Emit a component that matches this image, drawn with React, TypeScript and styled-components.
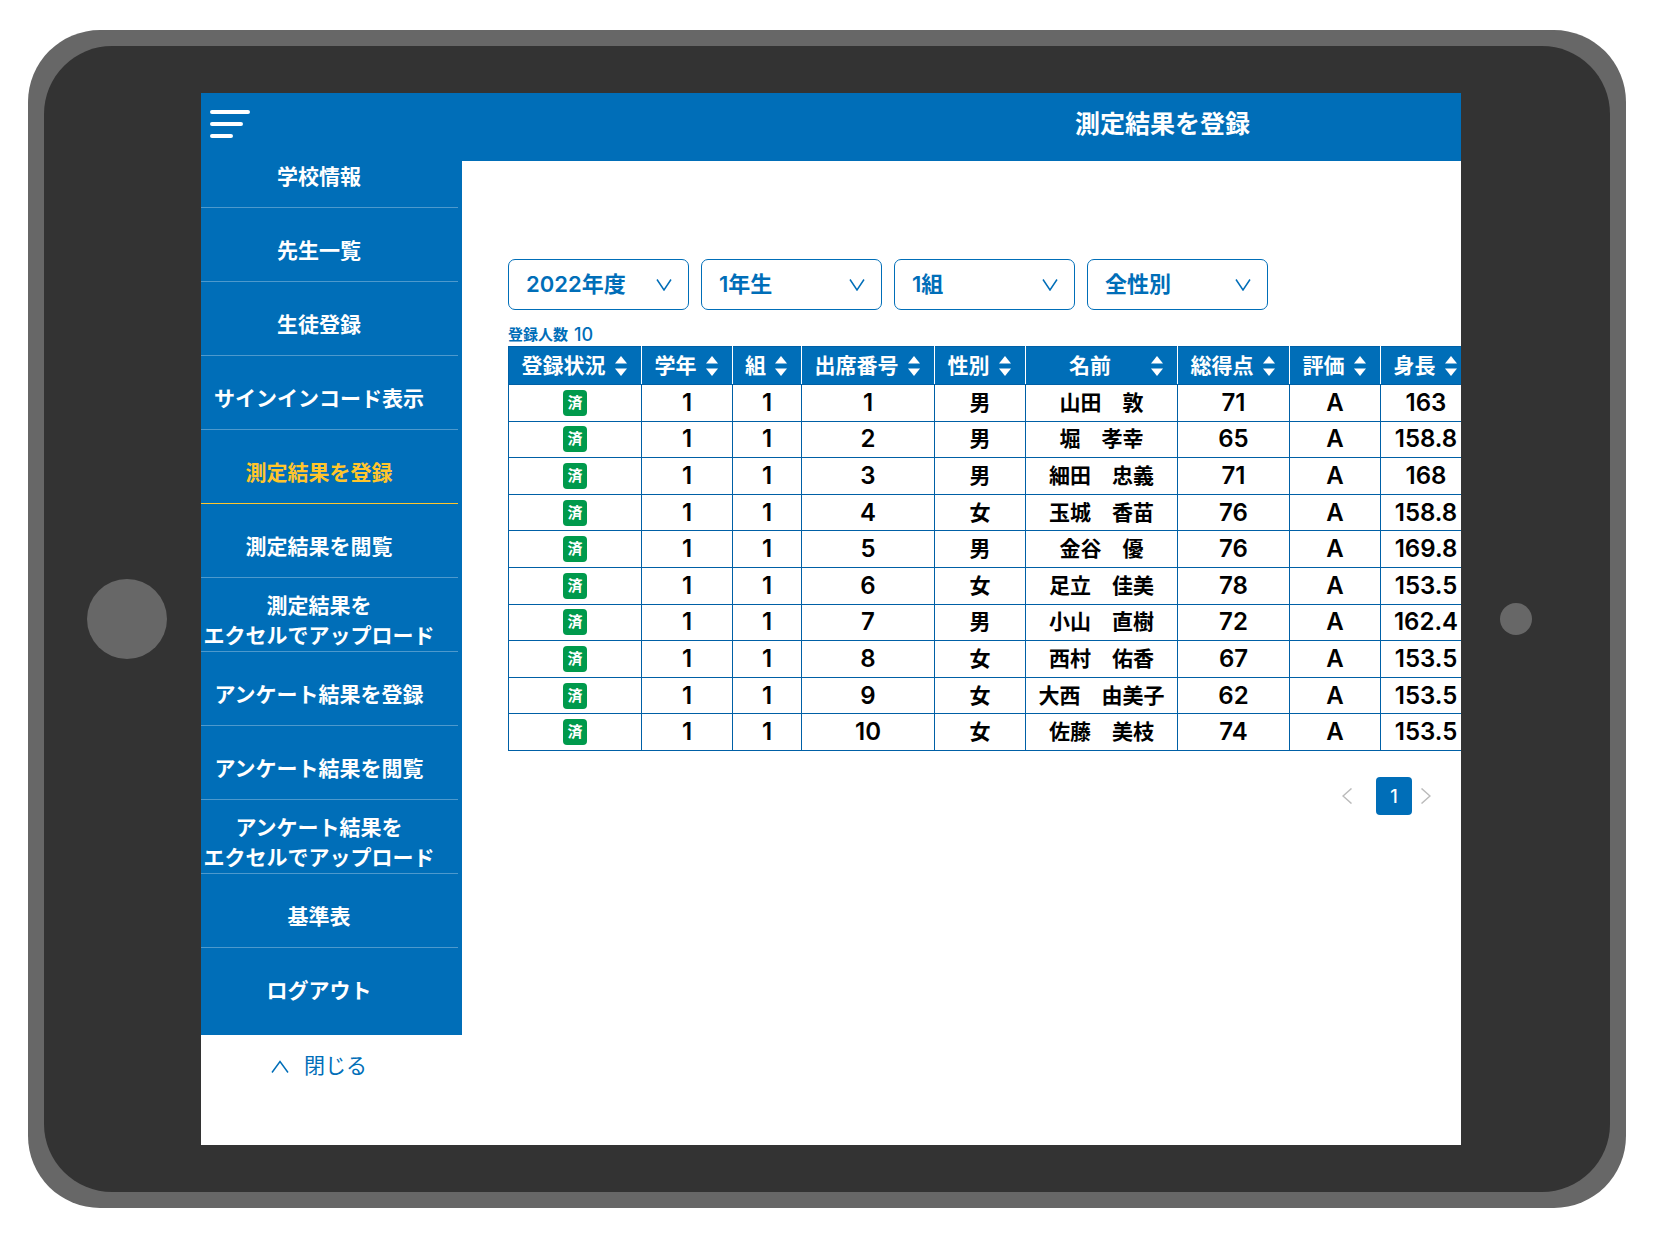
import React, { useState } from "react";
import styled, { createGlobalStyle } from "styled-components";

const BLUE = "#006eb8";
const LINE = "#0060a6";
const YELLOW = "#ffc52c";

const GlobalStyle = createGlobalStyle`
  *, *::before, *::after { box-sizing: border-box; }
  body {
    margin: 0;
    background: #fff;
    font-family: Inter, "Noto Sans CJK JP", sans-serif;
    color: #000;
  }
  button, select { font: inherit; color: inherit; margin: 0; padding: 0; border: 0; background: none; cursor: pointer; }
`;

const Page = styled.div`
  display: flex;
  min-height: 100vh;
  padding: 30px 28px 29px;
`;

const Device = styled.div`
  flex: 1;
  min-width: 0;
  display: flex;
  padding: 16px;
  border-radius: 72px;
  background: #676767;
`;

const Bezel = styled.div`
  flex: 1;
  min-width: 0;
  display: grid;
  grid-template-columns: 157px minmax(0, 1fr) 149px;
  align-items: center;
  padding: 47px 0;
  border-radius: 68px;
  background: #333;
`;

const Dot = styled.span<{ $size: number; $inset: number }>`
  width: ${(p) => p.$size}px;
  height: ${(p) => p.$size}px;
  margin-left: ${(p) => p.$inset}px;
  border-radius: 50%;
  background: #676767;
`;

const Screen = styled.div`
  align-self: stretch;
  display: flex;
  flex-direction: column;
  overflow: hidden;
  background: #fff;
`;

const Header = styled.header`
  display: flex;
  justify-content: space-between;
  align-items: center;
  height: 68px;
  padding: 0 211px 6px 9px;
  background: ${BLUE};
  color: #fff;
`;

const MenuButton = styled.button`
  display: flex;
`;

const Title = styled.h1`
  margin: 0;
  font-size: 25px;
  line-height: 36px;
  font-weight: 700;
`;

const Body = styled.div`
  flex: 1;
  display: grid;
  grid-template-columns: 261px minmax(0, 1fr);
`;

const Side = styled.aside`
  display: flex;
  flex-direction: column;
`;

const Nav = styled.nav`
  padding-bottom: 13px;
  background: ${BLUE};
`;

const NavList = styled.ul`
  list-style: none;
  margin: 0;
  padding: 0 4px 0 0;
`;

const NavItem = styled.li<{ $active?: boolean }>`
  display: flex;
  height: 74px;
  border-bottom: 1px solid ${(p) => (p.$active ? YELLOW : "rgba(255, 255, 255, 0.3)")};
  color: ${(p) => (p.$active ? YELLOW : "#fff")};
  &:first-child { height: 47px; }
  &:last-child { border-bottom-color: transparent; }
`;

const NavLink = styled.a<{ $double?: boolean }>`
  display: flex;
  align-items: flex-end;
  justify-content: center;
  width: 236px;
  padding-bottom: ${(p) => (p.$double ? 0 : 15)}px;
  color: inherit;
  font-size: 21px;
  line-height: 30px;
  font-weight: 700;
  text-align: center;
  text-decoration: none;
  white-space: pre;
`;

const CloseButton = styled.button`
  display: flex;
  align-items: center;
  justify-content: center;
  gap: 15px;
  width: 236px;
  margin-top: 16px;
  color: ${BLUE};
  font-size: 21px;
  line-height: 30px;
`;

const Main = styled.main`
  padding: 98px 0 0 46px;
`;

const Filters = styled.div`
  display: flex;
  gap: 12px;
`;

const SelectBox = styled.label`
  display: grid;
  align-items: center;
  width: 181px;
  height: 51px;
  color: ${BLUE};
  > * { grid-area: 1 / 1; }
  > svg { justify-self: end; margin-right: 17px; pointer-events: none; }
`;

const Select = styled.select`
  appearance: none;
  width: 100%;
  height: 100%;
  padding: 0 0 2px 17px;
  border: 1px solid ${BLUE};
  border-radius: 7px;
  background: #fff;
  font-size: 22px;
  font-weight: 600;
`;

const Count = styled.p`
  display: flex;
  align-items: center;
  gap: 6px;
  margin: 14px 0 0;
  color: ${BLUE};
  font-size: 15px;
  line-height: 22px;
  font-weight: 600;
`;

const CountValue = styled.span`
  font-size: 18px;
  font-weight: 500;
`;

const Table = styled.table`
  table-layout: fixed;
  width: 963px;
  height: 405px;
  border-collapse: collapse;
  text-align: center;
`;

const Col = styled.col<{ $width: number }>`
  width: ${(p) => p.$width}px;
`;

const Th = styled.th`
  height: 38px;
  padding: 0;
  border: 1px solid ${LINE};
  border-right-color: #fff;
  background: ${BLUE};
  color: #fff;
  & + & { border-left-color: #fff; }
`;

const SortButton = styled.button`
  display: flex;
  align-items: center;
  gap: 9px;
  width: 100%;
  padding: 0 14px 0 12px;
  font-size: 21px;
  line-height: 30px;
  font-weight: 700;
  white-space: nowrap;
  > span { flex: 1; }
`;

const Td = styled.td<{ $latin?: boolean }>`
  padding: 0;
  border: 1px solid ${LINE};
  font-size: ${(p) => (p.$latin ? 24 : 21)}px;
  line-height: 30px;
  font-weight: 600;
`;

const Badge = styled.span`
  display: block;
  width: 24px;
  margin: 0 auto;
  border-radius: 4px;
  background: #009a4c;
  color: #fff;
  font-size: 15px;
  line-height: 26px;
  font-weight: 700;
`;

const Pager = styled.nav`
  display: flex;
  align-items: center;
  justify-content: flex-end;
  padding: 26px 30px 0 0;
  color: #bbb;
`;

const PageButton = styled.button`
  width: 36px;
  height: 38px;
  margin: 0 9px 0 24px;
  border-radius: 4px;
  background: ${BLUE};
  color: #fff;
  font-size: 18px;
  font-weight: 500;
`;

const ArrowButton = styled.button`
  display: flex;
`;

function Chevron({ w, h, points, stroke = 1.5 }: { w: number; h: number; points: string; stroke?: number }) {
  return (
    <svg width={w} height={h} viewBox={`0 0 ${w} ${h}`} fill="none" stroke="currentColor" strokeWidth={stroke} aria-hidden="true">
      <polyline points={points} />
    </svg>
  );
}

function SortIcon() {
  return (
    <svg width="12" height="20" viewBox="0 0 12 20" fill="currentColor" aria-hidden="true">
      <path d="M6 0l6 7.5H0z" />
      <path d="M6 20l6-7.5H0z" />
    </svg>
  );
}

const menu = [
  "学校情報",
  "先生一覧",
  "生徒登録",
  "サインインコード表示",
  "測定結果を登録",
  "測定結果を閲覧",
  "測定結果を\nエクセルでアップロード",
  "アンケート結果を登録",
  "アンケート結果を閲覧",
  "アンケート結果を\nエクセルでアップロード",
  "基準表",
  "ログアウト",
];

const filters = [
  { label: "年度", options: ["2022年度", "2021年度"] },
  { label: "学年", options: ["1年生", "2年生", "3年生"] },
  { label: "組", options: ["1組", "2組", "3組"] },
  { label: "性別", options: ["全性別", "男", "女"] },
];

const columns = [
  { name: "登録状況", width: 133 },
  { name: "学年", width: 91 },
  { name: "組", width: 69 },
  { name: "出席番号", width: 133 },
  { name: "性別", width: 91 },
  { name: "名前", width: 152 },
  { name: "総得点", width: 112 },
  { name: "評価", width: 91 },
  { name: "身長", width: 91 },
];

const students = [
  { sex: "男", name: "山田　敦", score: 71, height: "163" },
  { sex: "男", name: "堀　孝幸", score: 65, height: "158.8" },
  { sex: "男", name: "細田　忠義", score: 71, height: "168" },
  { sex: "女", name: "玉城　香苗", score: 76, height: "158.8" },
  { sex: "男", name: "金谷　優", score: 76, height: "169.8" },
  { sex: "女", name: "足立　佳美", score: 78, height: "153.5" },
  { sex: "男", name: "小山　直樹", score: 72, height: "162.4" },
  { sex: "女", name: "西村　佑香", score: 67, height: "153.5" },
  { sex: "女", name: "大西　由美子", score: 62, height: "153.5" },
  { sex: "女", name: "佐藤　美枝", score: 74, height: "153.5" },
];

export default function App() {
  const [active, setActive] = useState("測定結果を登録");

  return (
    <Page>
      <GlobalStyle />
      <Device>
        <Bezel>
          <Dot $size={80} $inset={43} />
          <Screen>
            <Header>
              <MenuButton aria-label="メニュー">
                <svg width="40" height="30" viewBox="0 0 40 30" fill="none" stroke="#fff" strokeWidth="4" strokeLinecap="round" aria-hidden="true">
                  <path d="M2 3h36M2 15h29M2 27h19" />
                </svg>
              </MenuButton>
              <Title>測定結果を登録</Title>
            </Header>
            <Body>
              <Side>
                <Nav>
                  <NavList>
                    {menu.map((item) => (
                      <NavItem key={item} $active={item === active}>
                        <NavLink href="#" $double={item.includes("\n")} onClick={() => setActive(item)}>
                          {item}
                        </NavLink>
                      </NavItem>
                    ))}
                  </NavList>
                </Nav>
                <CloseButton>
                  <Chevron w={18} h={13} points="1,12.5 9,1.5 17,12.5" />
                  閉じる
                </CloseButton>
              </Side>
              <Main>
                <Filters>
                  {filters.map((f) => (
                    <SelectBox key={f.label}>
                      <Select aria-label={f.label}>
                        {f.options.map((o) => (
                          <option key={o}>{o}</option>
                        ))}
                      </Select>
                      <Chevron w={16} h={12} points="1,0.5 8,11 15,0.5" />
                    </SelectBox>
                  ))}
                </Filters>
                <Count>
                  登録人数 <CountValue>10</CountValue>
                </Count>
                <Table>
                  <colgroup>
                    {columns.map((c) => (
                      <Col key={c.name} $width={c.width} />
                    ))}
                  </colgroup>
                  <thead>
                    <tr>
                      {columns.map((c) => (
                        <Th key={c.name} scope="col">
                          <SortButton>
                            <span>{c.name}</span>
                            <SortIcon />
                          </SortButton>
                        </Th>
                      ))}
                    </tr>
                  </thead>
                  <tbody>
                    {students.map((s, i) => (
                      <tr key={s.name}>
                        <Td>
                          <Badge>済</Badge>
                        </Td>
                        <Td $latin>1</Td>
                        <Td $latin>1</Td>
                        <Td $latin>{i + 1}</Td>
                        <Td>{s.sex}</Td>
                        <Td>{s.name}</Td>
                        <Td $latin>{s.score}</Td>
                        <Td $latin>A</Td>
                        <Td $latin>{s.height}</Td>
                      </tr>
                    ))}
                  </tbody>
                </Table>
                <Pager aria-label="ページ">
                  <ArrowButton aria-label="前のページ">
                    <Chevron w={10} h={16} points="9.5,0.5 1,8 9.5,15.5" />
                  </ArrowButton>
                  <PageButton aria-current="page">1</PageButton>
                  <ArrowButton aria-label="次のページ">
                    <Chevron w={10} h={16} points="0.5,0.5 9,8 0.5,15.5" />
                  </ArrowButton>
                </Pager>
              </Main>
            </Body>
          </Screen>
          <Dot $size={32} $inset={39} />
        </Bezel>
      </Device>
    </Page>
  );
}
